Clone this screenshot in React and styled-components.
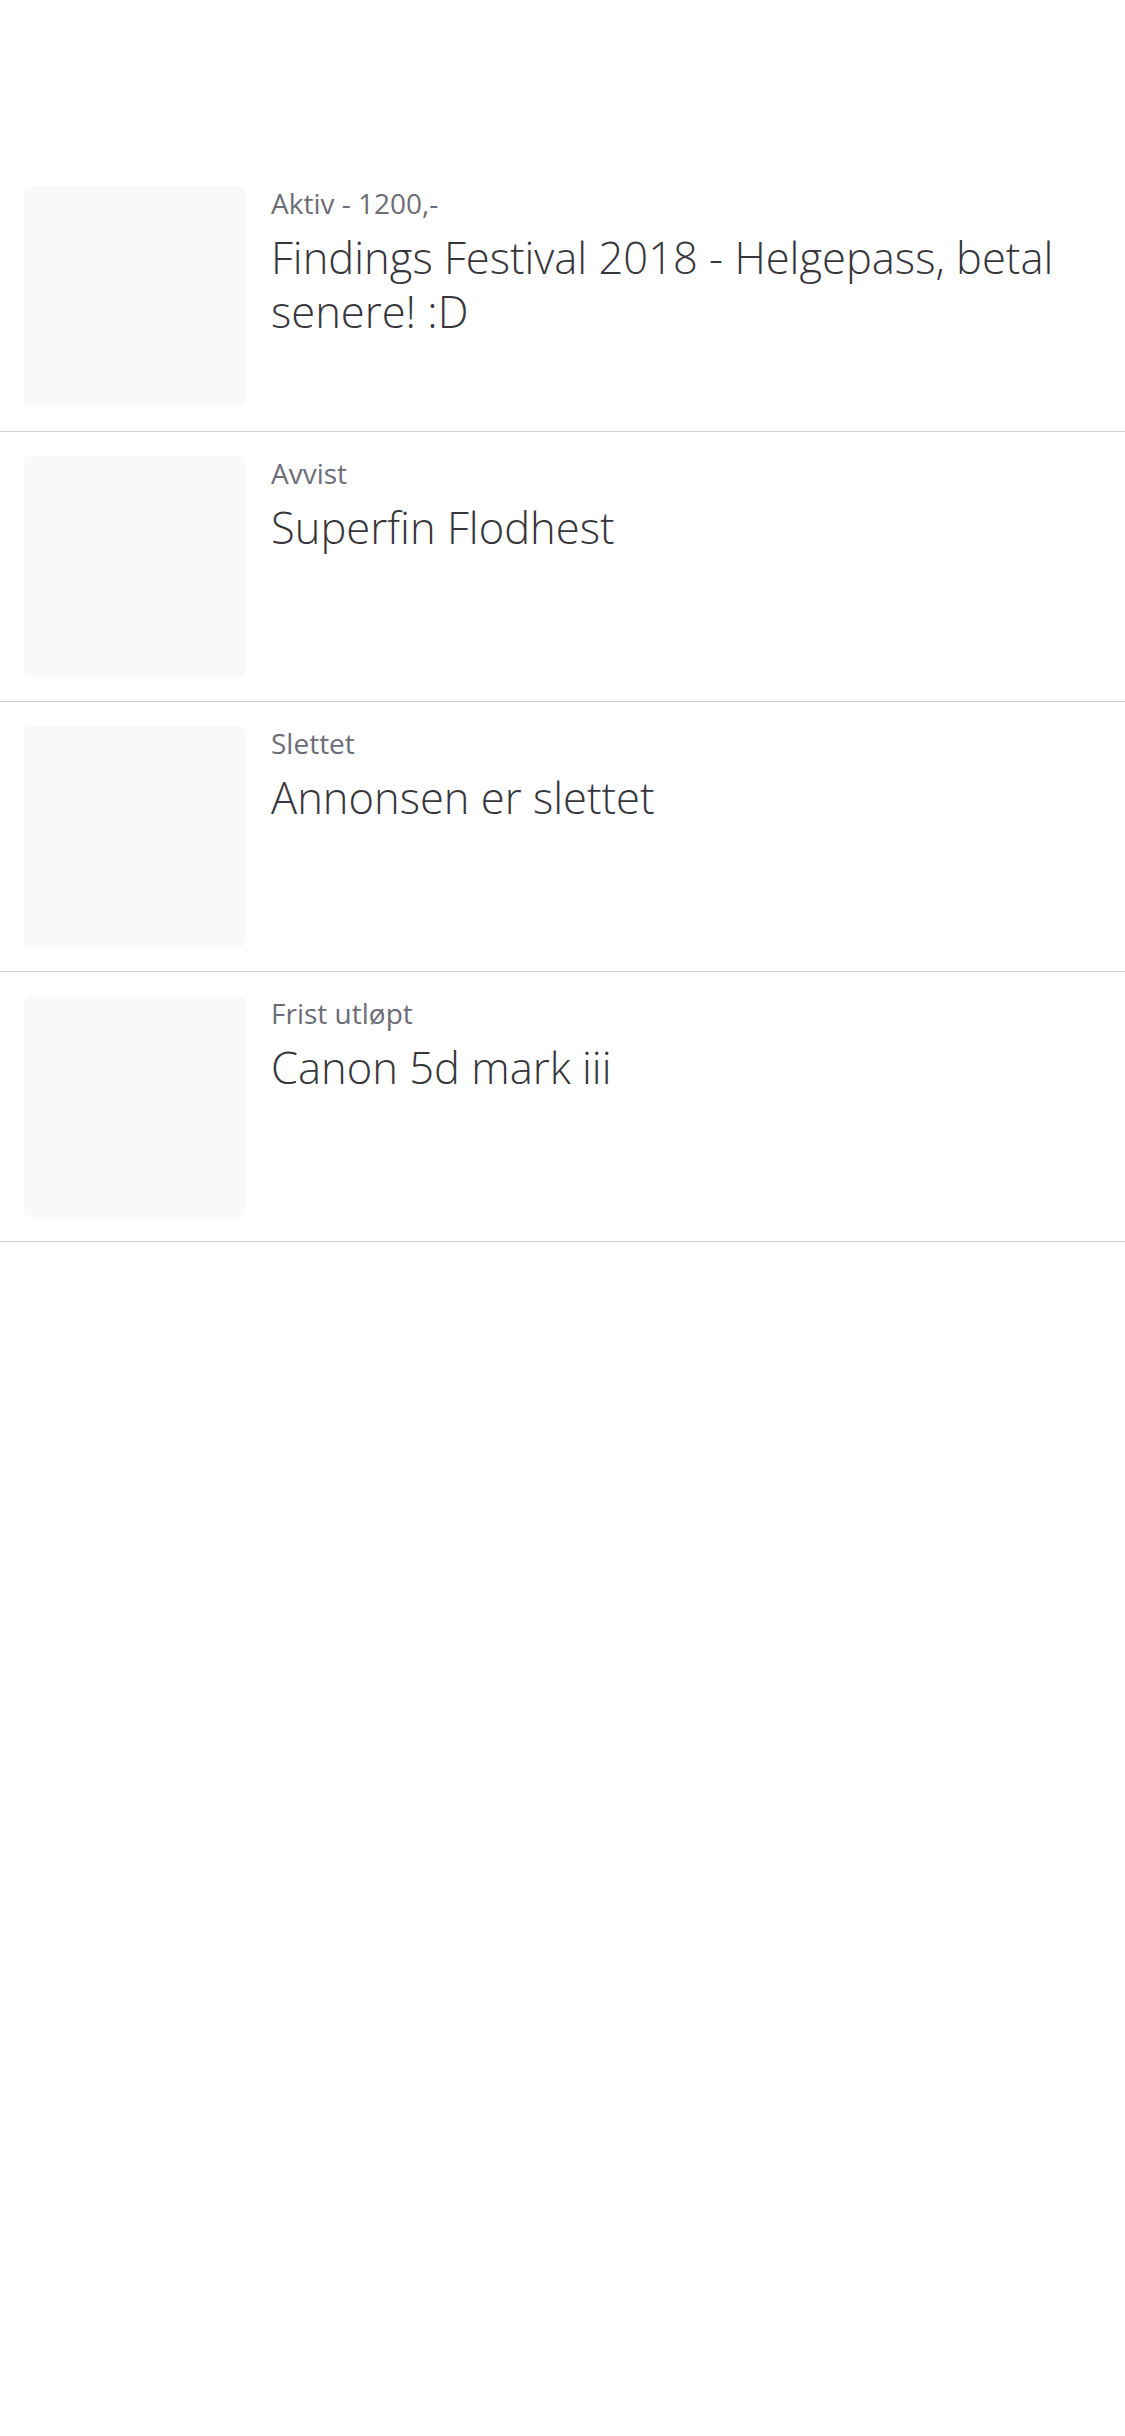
import React from 'react'
import styled, { createGlobalStyle } from 'styled-components'

const GlobalStyle = createGlobalStyle`
	html, body {
		margin: 0;
		padding: 0;
		background: #ffffff;
	}
	body {
		font-family: 'Open Sans', 'Noto Sans', sans-serif;
		-webkit-font-smoothing: antialiased;
	}
`

const ads = [
	{ id: 1, status: 'Aktiv - 1200,-', title: 'Findings Festival 2018 - Helgepass, betal senere! :D' },
	{ id: 2, status: 'Avvist', title: 'Superfin Flodhest' },
	{ id: 3, status: 'Slettet', title: 'Annonsen er slettet' },
	{ id: 4, status: 'Frist utløpt', title: 'Canon 5d mark iii' },
]

const App = () => {
	return (
		<StyledPage>
			<GlobalStyle />
			<StyledHeader />
			<StyledList>
				{ads.map(ad => (
					<StyledRow key={ad.id}>
						<StyledThumb />
						<StyledBody>
							<StyledStatus>{ad.status}</StyledStatus>
							<StyledTitle>{ad.title}</StyledTitle>
						</StyledBody>
					</StyledRow>
				))}
			</StyledList>
		</StyledPage>
	)
}

const StyledPage = styled.div`
	width: 100%;
	min-height: 2436px;
	background: #ffffff;
`

const StyledHeader = styled.header`
	height: 162px;
	background: #ffffff;
`

const StyledList = styled.ul`
	list-style: none;
	margin: 0;
	padding: 0;
`

const StyledRow = styled.li`
	display: flex;
	align-items: flex-start;
	gap: 26px;
	padding: 24px 24px 24px 24px;
	border-bottom: 1px solid #cfcfd2;
`

const StyledThumb = styled.div`
	flex: 0 0 221px;
	width: 221px;
	height: 221px;
	border-radius: 6px;
	background: #f8f9fb;
`

const StyledBody = styled.div`
	flex: 1;
	min-width: 0;
`

const StyledStatus = styled.div`
	font-size: 28px;
	line-height: 34px;
	font-weight: 400;
	color: #6d6d78;
`

const StyledTitle = styled.div`
	margin-top: 11px;
	font-size: 43.5px;
	line-height: 54px;
	font-weight: 300;
	color: #36363b;
`

export default App
